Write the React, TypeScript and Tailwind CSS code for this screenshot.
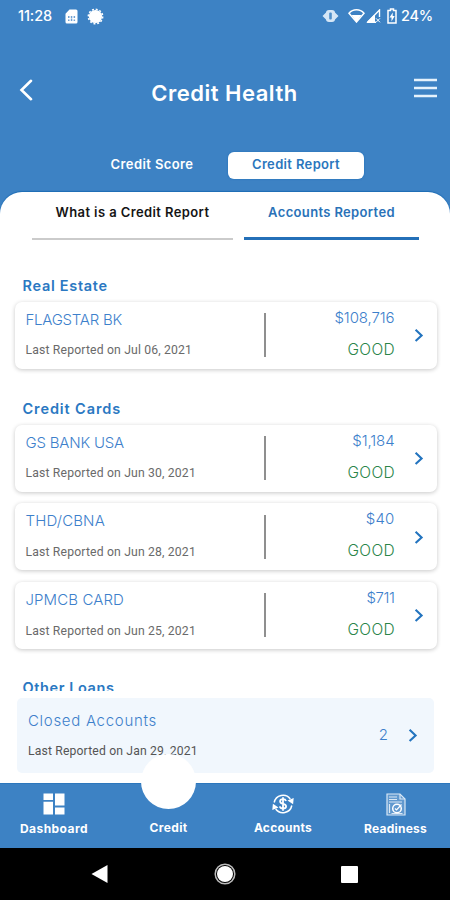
import React from "react";

type Account = { name: string; date: string; amount: string; nameCls: string; amountCls: string };

const realEstate: Account[] = [
  { name: "FLAGSTAR BK", date: "Jul 06, 2021", amount: "$108,716", nameCls: "tracking-[-0.25px]", amountCls: "tracking-[-0.1px]" },
];
const creditCards: Account[] = [
  { name: "GS BANK USA", date: "Jun 30, 2021", amount: "$1,184", nameCls: "tracking-[-0.2px]", amountCls: "tracking-[-0.1px]" },
  { name: "THD/CBNA", date: "Jun 28, 2021", amount: "$40", nameCls: "tracking-[0.15px]", amountCls: "tracking-[0.2px]" },
  { name: "JPMCB CARD", date: "Jun 25, 2021", amount: "$711", nameCls: "tracking-[0.1px]", amountCls: "tracking-[-0.4px]" },
];

function Chevron() {
  return (
    <svg width="10" height="14" viewBox="0 0 10 14" fill="none" stroke="#2374bf" strokeWidth="2.1">
      <path d="M1.6 1.8 7.6 7.4l-6 5.6" />
    </svg>
  );
}

function AccountCard({ a }: { a: Account }) {
  return (
    <div className="flex h-[67px] items-center rounded-[7px] bg-white pl-[11px] pr-[13px] shadow-[0_1px_4px_rgba(0,0,0,0.22)]">
      <div className="flex w-[238px] flex-col gap-[10.5px] whitespace-nowrap">
        <div className={`text-[15px] leading-5 font-light text-[#3d80cb] ${a.nameCls}`}>{a.name}</div>
        <div className="font-[Roboto,sans-serif] text-[12.2px] leading-5 tracking-[0.17px] text-[#6a6a6a]">Last Reported on {a.date}</div>
      </div>
      <div className="h-11 w-0.5 bg-[#8f8f8f]" />
      <div className="mt-[-3px] flex flex-1 flex-col gap-3 text-right whitespace-nowrap">
        <div className={`text-[15px] leading-5 font-light text-[#3d80cb] ${a.amountCls}`}>{a.amount}</div>
        <div className="-mr-[0.7px] text-[15.5px] leading-5 font-light tracking-[0.4px] text-[#2b8549]">GOOD</div>
      </div>
      <div className="ml-[19px]"><Chevron /></div>
    </div>
  );
}

function StatusBar() {
  return (
    <div className="flex h-8 items-center pl-[18px] pr-[17px] text-white">
      <span className="text-[14.5px] font-medium tracking-[-0.1px]">11:28</span>
      <svg className="ml-[13px]" width="13" height="15" viewBox="0 0 13 15">
        <path fill="#fff" d="M4.5.5H11a1.5 1.5 0 0 1 1.5 1.5v11a1.5 1.5 0 0 1-1.5 1.5H2A1.5 1.5 0 0 1 .5 13V4.7z" />
        <path fill="#6fa1d3" d="M3 7h1.5v2H3zM5.8 7h1.5v2H5.8zM8.6 7h1.5v2H8.6zM3 10.5h1.5V12H3zM5.8 9.5h1.5V12H5.8zM8.6 10.5h1.5V12H8.6z" />
      </svg>
      <svg className="ml-[9px]" width="17" height="17" viewBox="0 0 17 17">
        <circle cx="8.5" cy="8.5" r="6.6" fill="#fff" />
        <circle cx="8.5" cy="8.5" r="7.2" fill="none" stroke="#fff" strokeWidth="1.5" strokeDasharray="2 1.77" />
      </svg>
      <svg className="ml-auto" width="17" height="14" viewBox="0 0 17 14">
        <path fill="#d5e6f6" d="M5 2.5v9L.5 7zM12 2.5v9L16.5 7z" />
        <rect x="4" y="1" width="9" height="12" rx="3" fill="#d5e6f6" />
        <rect x="7.2" y="3.5" width="2.6" height="7" rx="1" fill="#4f8fca" />
      </svg>
      <svg className="ml-[9px]" width="17" height="14" viewBox="0 0 17 14">
        <path fill="none" stroke="#fff" strokeWidth="1.5" d="M1 4.2C5-.3 12-.3 16 4.2L8.500 13z" />
        <path fill="#fff" d="M3.6 6h9.800L8.500 13z" />
      </svg>
      <svg className="ml-[1px]" width="15" height="14" viewBox="0 0 15 14">
        <path fill="none" stroke="#fff" strokeWidth="1.4" d="M1.5 13.2 13.5 1v7M1.5 13.2H10" />
        <path fill="#fff" d="M1 13.6 8.500 6v7.600zM10 9.300l4 4M14 9.300l-4 4" stroke="#fff" />
      </svg>
      <svg className="ml-[6px]" width="10" height="16" viewBox="0 0 10 16">
        <path fill="none" stroke="#fff" strokeWidth="1.5" d="M1 2.5h2.5V1h3v1.5H9V15H1z" />
        <path fill="#fff" d="M5.8 4.5 2.5 9.5h2v4l3.200-5.500h-2z" />
      </svg>
      <span className="ml-1 text-[14.5px] font-medium tracking-[-0.2px]">24%</span>
    </div>
  );
}

function DashboardIcon() {
  return (
    <svg width="22" height="22" viewBox="0 0 22 22" fill="#fff">
      <path d="M.5.5H10V7H.5zM.5 8.7H10v12.800H.5zM12 .5h9.500v12H12zM12 14.500h9.500v7H12z" />
    </svg>
  );
}

function AccountsIcon() {
  return (
    <svg width="22" height="22" viewBox="0 0 22 22" fill="none" stroke="#fff" strokeWidth="1.5">
      <path d="M2.2 9.5A9 9 0 0 1 18.3 6M19.8 12.5A9 9 0 0 1 3.7 16" />
      <path fill="#fff" stroke="none" d="m15.5 7.5 6.200-2.500-.6 6.200zM6.500 14.500.3 17l.6-6.200z" />
      <path strokeWidth="1.8" d="M14 8c-.4-1.300-1.500-1.800-3-1.800-1.700 0-2.900.8-2.900 2.200 0 3.200 6 1.600 6 4.900 0 1.500-1.300 2.300-3.100 2.300-1.700 0-2.900-.7-3.200-2.200M11 4.200v13.600" />
    </svg>
  );
}

function ReadinessIcon() {
  return (
    <svg width="20" height="23" viewBox="0 0 20 23" fill="none" stroke="#d9e8f6" strokeWidth="1.2">
      <path d="M1 1h13l5 5v16H1z" fill="#ffffff30" />
      <path d="M14 1v5h5M3 4h8M3 6.500h8M3 9h13M3.500 11v9M5.500 20.500h11" />
      <circle cx="11" cy="15.5" r="4.3" stroke="#fff" strokeWidth="1.5" />
      <path d="m9 15.5 1.500 1.500 5-5.500" stroke="#fff" />
    </svg>
  );
}

export default function App() {
  return (
    <div className="flex h-[900px] w-[450px] flex-col overflow-hidden bg-[#3d82c4] font-[Inter,'Noto_Sans',sans-serif]">
      <StatusBar />
      <header className="flex h-[118px] items-center pl-[19px] pr-[13px] text-white">
        <svg className="-mt-0.5 shrink-0" width="15" height="22" viewBox="0 0 15 22" fill="none" stroke="#fff" strokeWidth="2.6" strokeLinecap="round">
          <path d="M12 1.8 2.500 11l9.500 9.200" />
        </svg>
        <h1 className="flex-1 pt-[3px] pl-px text-center text-[22px] leading-8 font-semibold tracking-[0.5px]">Credit Health</h1>
        <svg className="-mt-1.5" width="23" height="20" viewBox="0 0 23 20" stroke="#e6f2fc" strokeWidth="2.4">
          <path d="M0 2h23M0 10h23M0 18h23" />
        </svg>
      </header>
      <div className="flex h-[42px] items-start pl-[76px]">
        <div className="flex h-7 w-[152px] items-center justify-center pt-px text-[13px] font-semibold tracking-[0.4px] text-white">Credit Score</div>
        <div className="mt-[1.5px] flex h-[27px] w-[136px] items-center justify-center rounded-[6px] bg-white pb-px text-[13px] font-semibold tracking-[0.35px] text-[#2a76bd] shadow-[0_0_1px_1px_#2a76bd80]">Credit Report</div>
      </div>

      <main className="flex h-[591px] flex-col rounded-t-[22px] bg-white shadow-[0_-1px_1px_#1c6cb5]">
        <div className="flex h-[47.5px] shrink-0 gap-[11px] pl-8 text-[13px] leading-10 font-semibold">
          <div className="w-[201px] border-b-2 border-[#cbcbcb] text-center tracking-[0.4px] text-[#151515]">What is a Credit Report</div>
          <div className="w-[175px] border-b-[3px] border-[#2470b8] text-center tracking-[0.35px] text-[#2a72b8]">Accounts Reported</div>
        </div>
        <div className="flex h-[451px] shrink-0 flex-col overflow-hidden pl-[14.5px] pr-[13.5px] pt-[34px]">
          <h2 className="pl-2 text-[14.5px] leading-6 font-semibold tracking-[0.7px] text-[#2a78c2]">Real Estate</h2>
          <div className="mt-[4px] shrink-0">
            {realEstate.map((a) => <AccountCard key={a.name} a={a} />)}
          </div>
          <h2 className="mt-[28px] pl-2 text-[14.5px] leading-6 font-semibold tracking-[0.9px] text-[#2a78c2]">Credit Cards</h2>
          <div className="mt-[4px] flex shrink-0 flex-col gap-[11.7px]">
            {creditCards.map((a) => <AccountCard key={a.name} a={a} />)}
          </div>
          <h2 className="mt-[27px] pl-2 text-[14.5px] leading-6 font-semibold tracking-[0.6px] text-[#2a78c2]">Other Loans</h2>
        </div>
        <div className="mt-[7px] mr-4 ml-[17px] flex h-[75px] shrink-0 items-center rounded-[5px] bg-[#f1f7fd] pl-[11px] pr-[16px]">
          <div className="flex flex-1 flex-col gap-[10px] pt-px">
            <div className="text-[15px] leading-5 font-light tracking-[0.7px] text-[#3d80cb]">Closed Accounts</div>
            <div className="font-[Roboto,sans-serif] text-[12.2px] leading-5 tracking-[0.15px] text-[#555]">Last Reported on Jan 29, 2021</div>
          </div>
          <span className="mr-5 text-[15px] font-light text-[#3d80cb]">2</span>
          <Chevron />
        </div>
      </main>

      <nav className="relative grid h-[65px] shrink-0 grid-cols-[108px_121px_108px_117px] border-t border-[#2c77bd] bg-[#3d82c4] text-[12px] leading-4 font-bold text-white">
        <div className="absolute top-[-30px] left-[141px] size-[55px] rounded-full bg-white" />
        <div className="flex flex-col items-center gap-[6px] pt-[9px] tracking-[0.45px]"><DashboardIcon /><span>Dashboard</span></div>
        <div className="flex flex-col items-center pt-[36px] tracking-[0.4px]"><span>Credit</span></div>
        <div className="flex flex-col items-center gap-[5px] pt-[9px] tracking-[0.25px]"><AccountsIcon /><span>Accounts</span></div>
        <div className="flex flex-col items-center gap-[5px] pt-[9px] tracking-[0.25px]"><ReadinessIcon /><span>Readiness</span></div>
      </nav>
      <div className="flex h-[52px] shrink-0 items-center bg-black pl-[91px]">
        <svg width="17" height="20" viewBox="0 0 17 20" fill="#fff"><path d="M16.5 1v18L.5 10z" /></svg>
        <svg className="ml-[106px]" width="22" height="22" viewBox="0 0 22 22">
          <circle cx="11" cy="11" r="9.8" fill="none" stroke="#bbb" strokeWidth="1.5" />
          <circle cx="11" cy="11" r="8" fill="#fff" />
        </svg>
        <div className="ml-[105px] size-[17px] rounded-[1px] bg-white" />
      </div>
    </div>
  );
}
